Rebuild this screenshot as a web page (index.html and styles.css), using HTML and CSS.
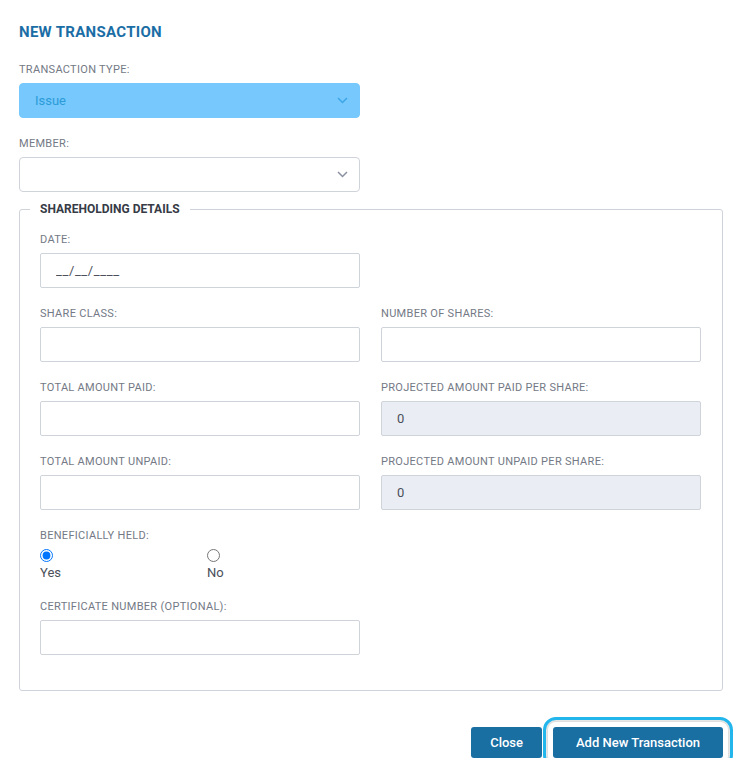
FILE: index.html
```html
<!DOCTYPE html>
<html>
<head>
<meta charset="utf-8" />
<title>New Transaction</title>
<link rel="stylesheet" href="styles.css">
</head>
<body>
<div class="modal">
  <h2 class="title">NEW TRANSACTION</h2>

  <div class="field">
    <label>TRANSACTION TYPE:</label>
    <div class="select select-active">
      <span>Issue</span>
      <svg width="11" height="7" viewBox="0 0 11 7"><path d="M1 1l4.5 4.5L10 1" fill="none" stroke="currentColor" stroke-width="1.5"/></svg>
    </div>
  </div>

  <div class="field field-last">
    <label>MEMBER:</label>
    <div class="select">
      <span></span>
      <svg width="11" height="7" viewBox="0 0 11 7"><path d="M1 1l4.5 4.5L10 1" fill="none" stroke="currentColor" stroke-width="1.5"/></svg>
    </div>
  </div>

  <fieldset class="details">
    <legend>SHAREHOLDING DETAILS</legend>
    <div class="grid">
      <div class="field">
        <label>DATE:</label>
        <input type="text" placeholder="__/__/____" />
      </div>
      <div></div>

      <div class="field">
        <label>SHARE CLASS:</label>
        <input type="text" />
      </div>
      <div class="field">
        <label>NUMBER OF SHARES:</label>
        <input type="text" />
      </div>

      <div class="field">
        <label>TOTAL AMOUNT PAID:</label>
        <input type="text" />
      </div>
      <div class="field">
        <label>PROJECTED AMOUNT PAID PER SHARE:</label>
        <input type="text" value="0" disabled />
      </div>

      <div class="field">
        <label>TOTAL AMOUNT UNPAID:</label>
        <input type="text" />
      </div>
      <div class="field">
        <label>PROJECTED AMOUNT UNPAID PER SHARE:</label>
        <input type="text" value="0" disabled />
      </div>
    </div>

    <div class="field radios">
      <label>BENEFICIALLY HELD:</label>
      <div class="radio-row">
        <div class="radio"><input type="radio" name="held" checked /><span>Yes</span></div>
        <div class="radio"><input type="radio" name="held" /><span>No</span></div>
      </div>
    </div>

    <div class="field half">
      <label>CERTIFICATE NUMBER (OPTIONAL):</label>
      <input type="text" />
    </div>
  </fieldset>

  <div class="actions">
    <button class="btn">Close</button>
    <button class="btn btn-main">Add New Transaction</button>
  </div>
</div>
</body>
</html>
```

FILE: styles.css
```css
* {
  box-sizing: border-box;
  font-family: Roboto, 'Liberation Sans', sans-serif;
}
body {
  margin: 0;
  background: #fff;
}
.modal {
  width: 723px;
  padding: 22px 0 0 19px;
}
.title {
  margin: 0 0 21px;
  font-size: 15px;
  line-height: 20px;
  font-weight: 700;
  color: #1b6ea5;
  letter-spacing: 0.3px;
}
.field {
  margin-bottom: 19px;
}
.field-last {
  margin-bottom: 9px;
}
.field > label {
  display: block;
  font-size: 11px;
  line-height: 14px;
  color: #737985;
  margin-bottom: 6px;
  letter-spacing: 0.3px;
}
.select {
  width: 341px;
  height: 35px;
  border: 1px solid #cfd3da;
  border-radius: 4px;
  display: flex;
  align-items: center;
  justify-content: space-between;
  padding: 0 11px 0 15px;
  font-size: 13px;
  color: #8a91a0;
}
.select-active {
  background: #76c8fd;
  border-color: #76c8fd;
  color: #3ea6e6;
}
.select-active span {
  color: #2c9bd8;
}
.details {
  margin: 0;
  border: 1px solid #cfd3da;
  border-radius: 3px;
  padding: 16px 20px 16px;
  width: 704px;
}
.details legend {
  margin-left: -10px;
  padding: 0 10px;
  font-size: 12px;
  line-height: 16px;
  font-weight: 700;
  color: #363b45;
}
.grid {
  display: grid;
  grid-template-columns: 320px 320px;
  column-gap: 21px;
}
input[type=text] {
  display: block;
  width: 100%;
  height: 35px;
  border: 1px solid #cfd3da;
  border-radius: 2px;
  padding: 0 15px;
  font-size: 13px;
  color: #4b505a;
  outline: none;
}
input::placeholder {
  color: #4b505a;
  letter-spacing: 0.6px;
}
input[disabled] {
  background: #eaedf4;
}
.half {
  width: 320px;
}
.radios > label {
  margin-bottom: 6px;
}
.radio-row {
  display: grid;
  grid-template-columns: 167px 100px;
}
.radio {
  display: flex;
  flex-direction: column;
  align-items: flex-start;
}
.radio input {
  margin: 0 0 3px;
  width: 13px;
  height: 13px;
}
.radio span {
  font-size: 13px;
  line-height: 16px;
  color: #4b505a;
}
.actions {
  display: flex;
  justify-content: flex-end;
  gap: 11px;
  margin-top: 36px;
}
.btn {
  height: 31px;
  border: none;
  border-radius: 3px;
  background: #196ea2;
  color: #fff;
  font-size: 13px;
  font-weight: 500;
  padding: 0 19px;
}
.btn-main {
  width: 170px;
  outline: 3px solid #22b6ec;
  outline-offset: 7px;
  box-shadow: 0 0 0 5px #fff, 0 0 3px 7px rgba(0, 0, 0, 0.15);
}
```
